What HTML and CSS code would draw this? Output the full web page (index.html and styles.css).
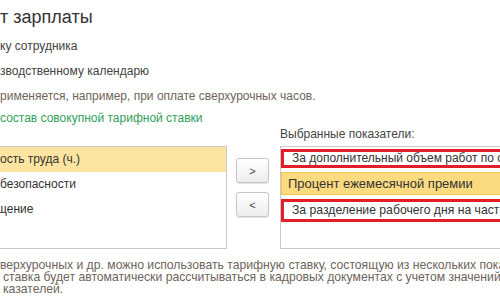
FILE: index.html
```html
<!DOCTYPE html>
<html lang="ru">
<head>
    <meta charset="UTF-8">
    <title>Расчет зарплаты</title>
    <link rel="stylesheet" href="styles.css">
</head>
<body>
    <div class="page">
        <h1 class="title">т зарплаты</h1>
        <div class="line">ку сотрудника</div>
        <div class="line">зводственному календарю</div>
        <div class="line note">рименяется, например, при оплате сверхурочных часов.</div>
        <div class="line link">состав совокупной тарифной ставки</div>

        <div class="picker">
            <div class="col-left">
                <div class="list list-left">
                    <div class="item selected">ость труда (ч.)</div>
                    <div class="item">безопасности</div>
                    <div class="item cut">щение</div>
                </div>
            </div>
            <div class="col-buttons">
                <button class="move">&gt;</button>
                <button class="move">&lt;</button>
            </div>
            <div class="col-right">
                <div class="caption">Выбранные показатели:</div>
                <div class="list list-right">
                    <div class="item marked first">За дополнительный объем работ по совмещению</div>
                    <div class="item current">Процент ежемесячной премии</div>
                    <div class="item marked">За разделение рабочего дня на части</div>
                </div>
            </div>
        </div>

        <div class="hint">
            <div>верхурочных и др. можно использовать тарифную ставку, состоящую из нескольких показателей,</div>
            <div class="shifted">ставка будет автоматически рассчитываться в кадровых документах с учетом значений</div>
            <div class="shifted">казателей.</div>
        </div>
    </div>
</body>
</html>
```

FILE: styles.css
```css
body {
    margin: 0;
    padding: 0;
    background-color: #ffffff;
    font-family: "Liberation Sans", Arial, sans-serif;
    color: #333333;
}
.page {
    width: 500px;
    height: 300px;
    overflow: hidden;
    white-space: nowrap;
}
.title {
    margin: 0 0 5px 0;
    padding-top: 5px;
    height: 24px;
    line-height: 24px;
    font-size: 18px;
    font-weight: normal;
    color: #333333;
}
.line {
    height: 25px;
    line-height: 25px;
    font-size: 12px;
    color: #444444;
}
.note {
    height: 24px;
    color: #6e645b;
}
.link {
    height: 20px;
    line-height: 20px;
    color: #30a05a;
}

/* выбор показателей */
.picker {
    display: flex;
    align-items: flex-start;
}
.col-left {
    flex: none;
    width: 227px;
    padding-top: 18px;
}
.list {
    box-sizing: border-box;
    height: 103px;
    border: 1px solid #c9c9c9;
    background-color: #ffffff;
    font-size: 12px;
    color: #333333;
    overflow: hidden;
}
.list-left {
    border-left: none;
}
.list-left .item {
    height: 25px;
    line-height: 25px;
}
.list-left .selected {
    background-color: #fde5a1;
}
.list-left .cut {
    text-indent: -3px;
}
.col-buttons {
    flex: none;
    display: flex;
    flex-direction: column;
    gap: 9px;
    width: 33px;
    margin-left: 9px;
    padding-top: 30px;
}
.move {
    height: 25px;
    padding: 0;
    border: 1px solid #c6c6c6;
    border-radius: 3px;
    background: linear-gradient(#ffffff, #ededed);
    box-shadow: 0 1px 1px rgba(0, 0, 0, 0.12);
    font-family: "Liberation Sans", Arial, sans-serif;
    font-size: 11px;
    color: #444444;
}
.col-right {
    flex: none;
    width: 260px;
    margin-left: 11px;
}
.caption {
    height: 13px;
    line-height: 13px;
    margin-bottom: 5px;
    font-size: 12px;
    color: #444444;
}
.list-right {
    border-right: none;
}
.list-right .item {
    box-sizing: border-box;
    margin-top: 4px;
}
.list-right .first {
    margin-top: 2px;
}
.marked {
    height: 23px;
    line-height: 17px;
    padding-left: 8px;
    border: 3px solid #e41e26;
    border-right: none;
    font-size: 12.2px;
}
.marked.first {
    height: 19px;
    line-height: 13px;
    font-size: 12px;
}
.current {
    height: 23px;
    line-height: 21px;
    padding-left: 6px;
    border: 1px solid #f1c455;
    border-right: none;
    background-color: #fcda80;
    font-size: 13px;
}
.hint {
    margin-top: 10px;
    font-size: 12.2px;
    line-height: 12px;
    color: #6e645b;
}
.hint .shifted {
    padding-left: 3px;
}
```
